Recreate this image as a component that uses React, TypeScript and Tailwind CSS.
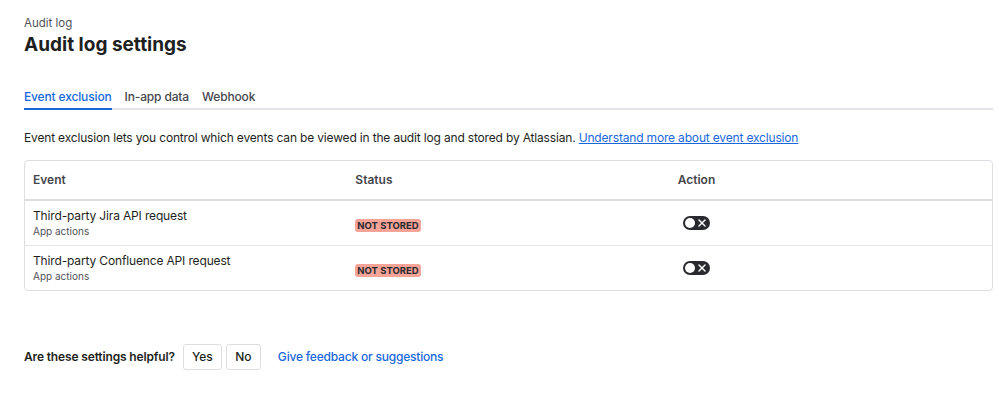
import { useState } from 'react';

const events = [
  { name: 'Third-party Jira API request', category: 'App actions' },
  { name: 'Third-party Confluence API request', category: 'App actions' },
];

function Toggle() {
  return (
    <button
      type="button"
      className="relative flex h-[14px] w-[27px] items-center rounded-full bg-[#292a2e] px-[2px]"
    >
      <span className="h-[10px] w-[10px] rounded-full bg-white" />
      <svg
        className="absolute right-[4px] top-[3px] h-[8px] w-[8px] text-white"
        viewBox="0 0 8 8"
        fill="none"
        stroke="currentColor"
        strokeWidth="1.4"
        strokeLinecap="round"
      >
        <line x1="1" y1="1" x2="7" y2="7" />
        <line x1="7" y1="1" x2="1" y2="7" />
      </svg>
    </button>
  );
}

export default function App() {
  const [tab, setTab] = useState('Event exclusion');
  const tabs = ['Event exclusion', 'In-app data', 'Webhook'];

  return (
    <div
      className="min-h-[393px] bg-white pl-6 pr-[6px] pt-[15px] text-[#1e1f21]"
      style={{ fontFamily: 'Inter, "Noto Sans", sans-serif' }}
    >
      <div className="text-[11.5px] leading-[16px] text-[#505258]">Audit log</div>
      <h1 className="mt-[2px] text-[19px] font-bold leading-[24px]">Audit log settings</h1>

      {/* Tabs */}
      <div className="mt-[32px] flex gap-[13px] border-b-2 border-[#e4e5e8]">
        {tabs.map((t) => (
          <button
            key={t}
            onClick={() => setTab(t)}
            className={`-mb-[2px] border-b-2 pb-[3px] text-[12px] font-medium leading-[16px] tracking-[-0.15px] ${
              tab === t ? 'border-[#1868db] text-[#1868db]' : 'border-transparent text-[#44464b]'
            }`}
          >
            {t}
          </button>
        ))}
      </div>

      <p className="mt-[19px] text-[12px] leading-[18px] tracking-[-0.17px]">
        Event exclusion lets you control which events can be viewed in the audit log and stored by Atlassian.{' '}
        <a href="#" className="text-[#1868db] underline">
          Understand more about event exclusion
        </a>
      </p>

      {/* Table */}
      <div className="mt-[13px] rounded-[4px] border border-[#dddee1]">
        <div className="grid grid-cols-3 border-b-2 border-[#dddee1] text-[12px] font-semibold leading-[16px] text-[#44464b]">
          <div className="px-2 py-[11px]">Event</div>
          <div className="px-2 py-[11px]">Status</div>
          <div className="px-2 py-[11px]">Action</div>
        </div>
        {events.map((e, i) => (
          <div
            key={e.name}
            className={`grid grid-cols-3 items-center ${i < events.length - 1 ? 'h-[45px] border-b border-[#e4e5e8]' : 'h-[44px]'}`}
          >
            <div className="px-2">
              <div className="text-[12px] leading-[16px] tracking-[-0.15px]">{e.name}</div>
              <div className="text-[10px] leading-[14px] text-[#505258]">{e.category}</div>
            </div>
            <div className="px-2">
              <span className="inline-block rounded-[3px] bg-[#f8a398] px-[2px] text-[9.5px] font-bold leading-[13px] text-[#292a2e]">
                NOT STORED
              </span>
            </div>
            <div className="flex px-2 pl-[13px]">
              <Toggle />
            </div>
          </div>
        ))}
      </div>

      {/* Feedback */}
      <div className="mt-[53px] flex items-center">
        <span className="text-[12px] font-semibold tracking-[-0.15px]">Are these settings helpful?</span>
        <button className="ml-[8px] h-[26px] w-[39px] rounded-[3px] border border-[#dddee1] text-[12px] font-medium">
          Yes
        </button>
        <button className="ml-[4px] h-[26px] w-[35px] rounded-[3px] border border-[#dddee1] text-[12px] font-medium">
          No
        </button>
        <a href="#" className="ml-[17px] text-[12px] font-medium tracking-[-0.2px] text-[#1868db]">
          Give feedback or suggestions
        </a>
      </div>
    </div>
  );
}
